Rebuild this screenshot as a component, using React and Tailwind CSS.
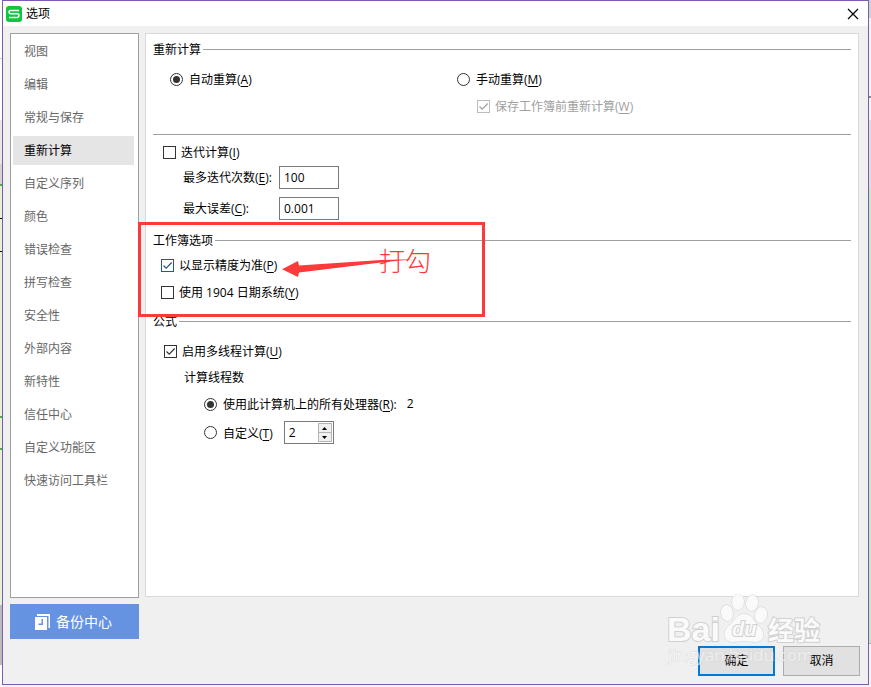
import { useState } from 'react'

const menuItems = [
  '视图', '编辑', '常规与保存', '重新计算', '自定义序列', '颜色', '错误检查',
  '拼写检查', '安全性', '外部内容', '新特性', '信任中心', '自定义功能区', '快速访问工具栏',
]

const Key = ({ children }) => (
  <>(<span className="underline underline-offset-2">{children}</span>)</>
)

const SectionTitle = ({ children }) => (
  <div className="flex h-5 items-center gap-[2px]">
    <h2 className="pt-[2px]">{children}</h2>
    <span className="h-px flex-1 bg-[#a0a0a0]"></span>
  </div>
)

const Check = ({ children, tone = 'border-[#333] text-[#333]', ...props }) => (
  <label className={`flex h-5 items-center gap-[5px] ${props.disabled ? 'text-[#a0a0a0]' : ''}`}>
    <span className="relative flex">
      <input type="checkbox" className={`peer size-[13px] appearance-none border bg-white ${tone}`} {...props} />
      <svg viewBox="0 0 13 13" className={`pointer-events-none absolute inset-0 hidden size-[13px] peer-checked:block ${tone}`} fill="none" stroke="currentColor" strokeWidth="1.2">
        <path d="M2.5 6.5 5.2 9.2 10.7 3.5" />
      </svg>
    </span>
    <span className="pt-[2px]">{children}</span>
  </label>
)

const Radio = ({ children, ...props }) => (
  <label className="flex h-5 items-center gap-[6px]">
    <span className="relative flex">
      <input type="radio" className="peer size-[13px] appearance-none rounded-full border border-[#333] bg-white" {...props} />
      <span className="pointer-events-none absolute inset-[3px] hidden rounded-full bg-[#333] peer-checked:block"></span>
    </span>
    <span className="pt-[2px]">{children}</span>
  </label>
)

// Red frame, arrow and note drawn over the workbook options
const Annotation = () => (
  <div className="pointer-events-none absolute -top-2 -left-[15px] h-[95px] w-[347px] border-3 border-[#fc3a3a] text-[#fc3a3a]">
    <svg viewBox="0 0 136 20" className="absolute top-[34px] left-[140px] h-5 w-[136px]" fill="currentColor">
      <path d="M1 10.3 17 2 18 6.5 100 1 132 0.2 100 3.600 18 13.5 17 18Z" />
    </svg>
    <span className="absolute top-[20px] left-[238px] text-[26px] leading-8 font-light">打勾</span>
  </div>
)

const Watermark = () => (
  <svg viewBox="0 0 156 76" className="pointer-events-none absolute right-[46px] bottom-[14px] h-[76px] w-[156px]" fill="#fafafa" stroke="#d0d0d0" strokeWidth="2" paintOrder="stroke">
    <text x="1" y="47" className="font-['Liberation_Sans'] text-[34px] font-bold">Bai</text>
    <g strokeWidth="1">
      <ellipse cx="61" cy="19" rx="6" ry="8" transform="rotate(-8 61 19)" />
      <ellipse cx="72" cy="8" rx="6" ry="8" />
      <ellipse cx="86" cy="9" rx="6" ry="8" transform="rotate(8 86 9)" />
      <ellipse cx="95" cy="21" rx="6" ry="8" transform="rotate(12 95 21)" />
      <path d="M78 20C71 20 69 26 65 30 60 34 57 38 59 43 62 51 71 47 78 47 85 47 94 51 97 43 99 37 94 34 90 29 87 25 85 20 78 20Z" />
    </g>
    <text x="66" y="42" className="font-['Liberation_Sans'] text-[20px] font-bold italic">du</text>
    <text x="102" y="46" className="font-['Noto_Sans_CJK_SC'] text-[26px] font-bold">经验</text>
    <text x="2" y="67" className="font-['Open_Sans'] text-[17px]" strokeWidth="1" opacity="0.6">jingyan.baidu.com</text>
  </svg>
)

// Spreadsheet visible on both sides behind the dialog
const LeftEdge = () => (
  <div className="flex w-[2px] flex-col bg-[#e4f2dc]">
    <div className="h-[58px] bg-white"></div>
    <div className="h-[62px] border-t border-[#ccc] bg-white"></div>
    <div className="h-11 bg-[#e8e8e8]"></div>
    <div className="h-5 bg-[#d4d4d4]"></div>
    <div className="h-[34px] border-t-2 border-[#4caf50]"></div>
    <div className="h-[33px] border-t border-black"></div>
    <div className="h-[165px] border-t border-black"></div>
    <div className="h-8 border-t-2 border-[#4caf50]"></div>
    <div className="flex-1 border-t-2 border-[#4caf50]"></div>
    <div className="h-[60px] bg-[#bbb]"></div>
    <div className="h-[22px] bg-white"></div>
  </div>
)

const RightEdge = () => (
  <div className="flex w-[2px] flex-col bg-[#c8e6c2]">
    <div className="h-[18px] bg-[#d0d0d8]"></div>
    <div className="h-[78px] bg-[#f5f3f8]"></div>
    <div className="h-6 border-t-2 border-[#888] bg-[#f5f3f8]"></div>
    <div className="h-[68px] bg-[#dedede]"></div>
    <div className="flex-1"></div>
    <div className="h-[30px] border-t border-[#aaa] bg-[#f5f3f8]"></div>
    <div className="h-[14px] bg-[#f5f3f8]"></div>
  </div>
)

const App = () => {
  const [active, setActive] = useState('重新计算')

  return (
    <div className="flex min-h-screen bg-[#f3f1f6] font-['Open_Sans','Noto_Sans_CJK_SC',sans-serif] text-[12px] leading-5 text-black">
      <LeftEdge />
      <main className="relative mb-[2px] flex flex-1 flex-col border border-[#8059b0] bg-[#f0f0f0]">
        <header className="flex h-[25px] items-center bg-white pr-[9px] pl-[3px]">
          <svg viewBox="0 0 16 16" className="size-4">
            <rect width="16" height="16" rx="3" fill="#12c53f" />
            <path d="M13 4.5H4.500Q3 4.500 3 6T4.500 7.800H11.500Q13 7.800 13 9.500T11.500 11.500H3" fill="none" stroke="#fff" strokeWidth="1.5" />
          </svg>
          <h1 className="ml-1">选项</h1>
          <button aria-label="关闭" className="ml-auto">
            <svg viewBox="0 0 12 12" className="size-3" stroke="#000" strokeWidth="1.2">
              <path d="M1 1 11 11M11 1 1 11" />
            </svg>
          </button>
        </header>

        <div className="flex flex-1 gap-[6px] pt-[7px] pr-[9px] pl-[7px]">
          <div className="flex w-[129px] flex-col">
            <nav className="flex flex-1 flex-col gap-1 border border-[#a0a0a0] bg-white py-[3px] pr-1 pl-[2px]">
              {menuItems.map((item) => (
                <button
                  key={item}
                  onClick={() => setActive(item)}
                  className={`h-[29px] pt-px pl-[11px] text-left ${item === active ? 'bg-[#e5e5e5] text-black' : 'text-[#666]'}`}
                >
                  {item}
                </button>
              ))}
            </nav>
            <button className="mt-[6px] flex h-[35px] items-center justify-center gap-[5px] bg-[#6593e1] pr-[2px] text-[14px] text-white">
              <svg viewBox="0 0 16 16" className="size-4" fill="#fff">
                <path d="M2 0H15V14H13.5V2H2Z" />
                <path fillRule="evenodd" d="M0 3H12V16H0ZM6.5 5H8V11H3.5V9.5H6.5Z" />
              </svg>
              备份中心
            </button>
          </div>

          <div className="mb-[42px] flex-1 border border-[#d9d9d9] bg-white pt-[5px] pr-[7px] pl-[7px]">
            <section>
              <SectionTitle>重新计算</SectionTitle>
              <div className="mt-[10px] grid grid-cols-[287px_1fr] pl-[17px]">
                <Radio name="mode" defaultChecked>自动重算<Key>A</Key></Radio>
                <div>
                  <Radio name="mode">手动重算<Key>M</Key></Radio>
                  <div className="mt-[7px] pl-5">
                    <Check defaultChecked disabled tone="border-[#bcbcbc] text-[#a0a0a0]">保存工作簿前重新计算<Key>W</Key></Check>
                  </div>
                </div>
              </div>
            </section>

            <section className="mt-[18px] border-t border-[#a0a0a0] pt-[7px]">
              <div className="pl-[10px]">
                <Check>迭代计算<Key>I</Key></Check>
              </div>
              <div className="mt-1 grid grid-cols-[96px_60px] items-center gap-y-2 pl-[30px]">
                <label htmlFor="times">最多迭代次数<Key>E</Key>:</label>
                <input id="times" defaultValue="100" className="h-[23px] border border-[#7a7a7a] px-1" />
                <label htmlFor="error">最大误差<Key>C</Key>:</label>
                <input id="error" defaultValue="0.001" className="h-[23px] border border-[#7a7a7a] px-1" />
              </div>
            </section>

            <section className="relative mt-[10px]">
              <SectionTitle>工作簿选项</SectionTitle>
              <div className="mt-[5px] flex flex-col gap-[7px] pl-2">
                <Check defaultChecked tone="border-[#26568c] text-[#26568c]">以显示精度为准<Key>P</Key></Check>
                <Check>使用 1904 日期系统<Key>Y</Key></Check>
              </div>
              <Annotation />
            </section>

            <section className="mt-[9px]">
              <SectionTitle>公式</SectionTitle>
              <div className="mt-[10px] pl-[11px]">
                <Check defaultChecked>启用多线程计算<Key>U</Key></Check>
              </div>
              <p className="mt-[7px] pl-[31px]">计算线程数</p>
              <div className="mt-[6px] flex flex-col gap-[7px] pl-[51px]">
                <div className="flex items-center gap-[10px]">
                  <Radio name="threads" defaultChecked>使用此计算机上的所有处理器<Key>R</Key>:</Radio>
                  <span>2</span>
                </div>
                <div className="flex items-center gap-[11px]">
                  <Radio name="threads">自定义<Key>T</Key></Radio>
                  <div className="flex h-[23px] w-[50px] border border-[#7a7a7a]">
                    <input aria-label="线程数" defaultValue="2" className="w-[33px] px-1" />
                    <div className="flex flex-col py-px">
                      <button aria-label="增加" className="flex h-[10px] w-[14px] items-center justify-center border border-[#b5b5b5] bg-[#f0f0f0]">
                        <svg viewBox="0 0 5 3" className="h-[3px] w-[5px]"><path d="M0 3H5L2.5 0Z" /></svg>
                      </button>
                      <button aria-label="减少" className="flex h-[9px] w-[14px] items-center justify-center border border-t-0 border-[#b5b5b5] bg-[#f0f0f0]">
                        <svg viewBox="0 0 5 3" className="h-[3px] w-[5px]"><path d="M0 0H5L2.5 3Z" /></svg>
                      </button>
                    </div>
                  </div>
                </div>
              </div>
            </section>
          </div>
        </div>

        <footer className="mt-[7px] flex justify-end gap-2 pr-2 pb-2">
          <button className="h-[30px] w-[77px] border-2 border-[#0078d7] bg-[#e1e1e1]">确定</button>
          <button className="h-[30px] w-[77px] border border-[#adadad] bg-[#e1e1e1]">取消</button>
        </footer>
        <Watermark />
      </main>
      <RightEdge />
    </div>
  )
}

export default App
